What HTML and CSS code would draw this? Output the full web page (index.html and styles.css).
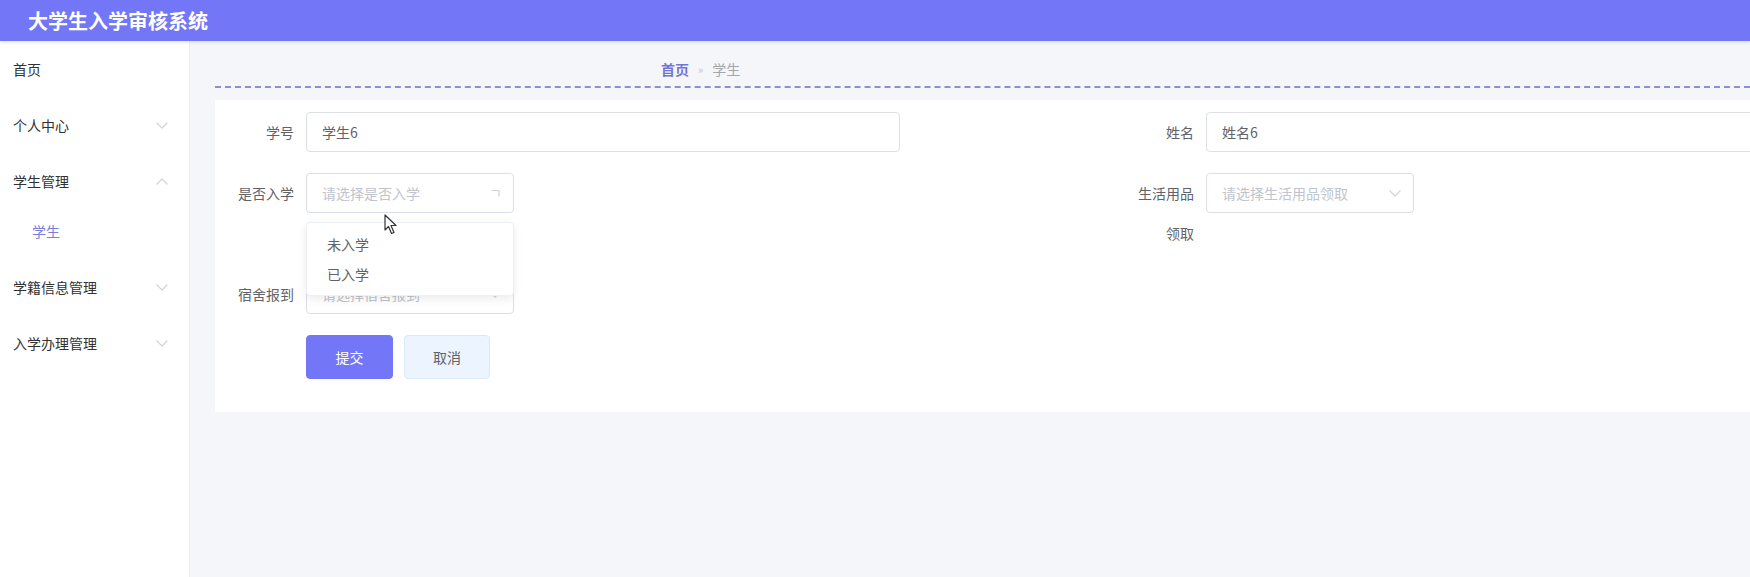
FILE: index.html
```html
<!DOCTYPE html>
<html lang="zh-CN">
    <head>
        <meta charset="UTF-8">
        <title>大学生入学审核系统 | 学生</title>
        <link rel="stylesheet" href="styles.css">
    </head>
    <body>
        <header class="topbar">
            <span class="brand">大学生入学审核系统</span>
        </header>
        <div class="layout">
            <nav class="sidebar">
                <div class="menu-item">首页</div>
                <div class="menu-item">
                    <span>个人中心</span>
                    <svg class="chevron" width="12" height="7" viewBox="0 0 12 7"><path d="M1 1 L6 6 L11 1"/></svg>
                </div>
                <div class="menu-item">
                    <span>学生管理</span>
                    <svg class="chevron" width="12" height="7" viewBox="0 0 12 7"><path d="M1 6 L6 1 L11 6"/></svg>
                </div>
                <div class="sub-item active">学生</div>
                <div class="menu-item">
                    <span>学籍信息管理</span>
                    <svg class="chevron" width="12" height="7" viewBox="0 0 12 7"><path d="M1 1 L6 6 L11 1"/></svg>
                </div>
                <div class="menu-item">
                    <span>入学办理管理</span>
                    <svg class="chevron" width="12" height="7" viewBox="0 0 12 7"><path d="M1 1 L6 6 L11 1"/></svg>
                </div>
            </nav>
            <main class="content">
                <div class="breadcrumb">
                    <span class="crumb-home">首页</span>
                    <span class="crumb-sep">»</span>
                    <span class="crumb-current">学生</span>
                </div>
                <section class="card">
                    <form class="form">
                        <div class="form-item">
                            <label class="label">学号</label>
                            <div class="input">学生6</div>
                        </div>
                        <div class="form-item">
                            <label class="label">姓名</label>
                            <div class="input">姓名6</div>
                        </div>

                        <div class="form-item">
                            <label class="label">是否入学</label>
                            <div class="control">
                                <div class="select">
                                    <span class="placeholder">请选择是否入学</span>
                                    <svg class="turning" width="10" height="9" viewBox="0 0 10 9"><path d="M1 1.5 H8 V7"/></svg>
                                </div>
                                <ul class="dropdown">
                                    <li>未入学</li>
                                    <li>已入学</li>
                                </ul>
                                <svg class="cursor" width="14" height="21" viewBox="0 0 14 21"><path d="M1 1 L1 16 L4.5 12.5 L7.5 19.5 L10 18.5 L7 11.5 L12 11.5 Z"/></svg>
                            </div>
                        </div>
                        <div class="form-item">
                            <label class="label">生活用品领取</label>
                            <div class="select">
                                <span class="placeholder">请选择生活用品领取</span>
                                <svg class="arrow" width="12" height="7" viewBox="0 0 12 7"><path d="M1 1 L6 6 L11 1"/></svg>
                            </div>
                        </div>

                        <div class="form-item">
                            <label class="label">宿舍报到</label>
                            <div class="select">
                                <span class="placeholder">请选择宿舍报到</span>
                                <svg class="arrow" width="12" height="7" viewBox="0 0 12 7"><path d="M1 1 L6 6 L11 1"/></svg>
                            </div>
                        </div>
                        <div></div>

                        <div class="actions">
                            <button type="button" class="btn btn-primary">提交</button>
                            <button type="button" class="btn btn-plain">取消</button>
                        </div>
                    </form>
                </section>
            </main>
        </div>
    </body>
</html>
```

FILE: styles.css
```css
* {
    box-sizing: border-box;
}

body {
    margin:      0;
    padding:     0;
    height:      100vh;
    overflow:    hidden;
    font-family: "Noto Sans CJK SC", "Noto Sans", sans-serif;
    font-size:   14px;
    color:       #606266;
    background:  #f5f6f9;
}

.topbar {
    position:     relative;
    z-index:      2;
    height:       41px;
    padding-left: 28px;
    background:   #7376f6;
    box-shadow:   0 1px 4px rgba(0, 0, 0, .12);
    display:      flex;
    align-items:  center;
}

.brand {
    color:       #fff;
    font-size:   20px;
    font-weight: bold;
    line-height: 24px;
}

.layout {
    display: flex;
    height:  calc(100vh - 41px);
}

.sidebar {
    width:        190px;
    flex-shrink:  0;
    background:   #fff;
    border-right: 1px solid #ebedf0;
}

.menu-item {
    height:          56px;
    padding:         0 21px 0 13px;
    display:         flex;
    align-items:     center;
    justify-content: space-between;
    color:           #303133;
}

.sub-item {
    height:         50px;
    padding:        0 0 6px 32px;
    display:        flex;
    align-items:    center;
}

.sub-item.active {
    color: #7b7ddb;
}

.chevron path,
.arrow path,
.turning path {
    fill:            none;
    stroke:          #d0d3da;
    stroke-width:    1.2;
    stroke-linecap:  round;
    stroke-linejoin: round;
}

.content {
    flex:         1;
    min-width:    0;
    padding-left: 25px;
    overflow:     hidden;
}

.breadcrumb {
    padding:       18px 0 7px 446px;
    line-height:   20px;
    border-bottom: 2px dashed #8c8ddb;
    display:       flex;
    align-items:   center;
    gap:           9px;
}

.crumb-home {
    color:       #7275d8;
    font-weight: bold;
}

.crumb-sep {
    color:     #c0c4cc;
    font-size: 11px;
}

.crumb-current {
    color: #a3a6ad;
}

.card {
    margin-top: 12px;
    width:      1820px;
    background: #fff;
    padding:    12px 0 33px 11px;
}

.form {
    display:               grid;
    grid-template-columns: 900px 900px;
    row-gap:               21px;
    margin:                0;
}

.form-item {
    display:     flex;
    align-items: flex-start;
}

.label {
    width:         80px;
    flex-shrink:   0;
    padding-right: 12px;
    text-align:    right;
    line-height:   40px;
    color:         #606266;
}

.control {
    position: relative;
}

.input,
.select {
    height:        40px;
    border:        1px solid #dcdfe6;
    border-radius: 4px;
    padding:       0 15px;
    line-height:   38px;
    background:    #fff;
}

.input {
    width: 594px;
}

.select {
    width:           208px;
    display:         flex;
    align-items:     center;
    justify-content: space-between;
    padding-right:   12px;
}

.placeholder {
    color: #c0c4cc;
}

.dropdown {
    position:      absolute;
    z-index:       3;
    top:           49px;
    left:          0;
    width:         208px;
    margin:        0;
    padding:       6px 0;
    list-style:    none;
    background:    #fff;
    border:        1px solid #eef0f3;
    border-radius: 4px;
    box-shadow:    0 3px 10px rgba(0, 0, 0, .08);
}

.dropdown li {
    height:       30px;
    line-height:  30px;
    padding-left: 20px;
    color:        #606266;
}

.cursor {
    position: absolute;
    z-index:  4;
    top:      41px;
    left:     78px;
}

.cursor path {
    fill:            #fff;
    stroke:          #333;
    stroke-width:    1.2;
    stroke-linejoin: round;
}

.actions {
    grid-column:  1 / -1;
    padding-left: 80px;
    display:      flex;
    gap:          11px;
}

.btn {
    height:        44px;
    border-radius: 4px;
    font:          inherit;
    font-size:     14px;
    cursor:        pointer;
}

.btn-primary {
    width:      87px;
    background: #7376f6;
    border:     1px solid #7376f6;
    color:      #fff;
}

.btn-plain {
    width:      86px;
    background: #ecf5ff;
    border:     1px solid #dbe9f8;
    color:      #606266;
}
```
